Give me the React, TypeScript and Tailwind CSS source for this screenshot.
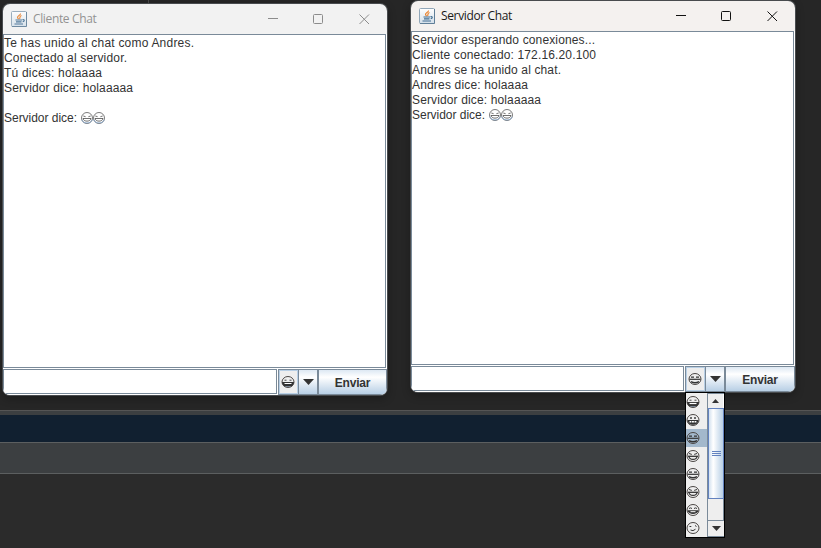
type Face = 'sweat' | 'teeth' | 'grin' | 'laugh' | 'open' | 'wink' | 'thin';

function Emoji({ face, color = '#333333', bg = '#eeeeee', className = '' }: { face: Face; color?: string; bg?: string; className?: string }) {
  const thin = face === 'thin';
  return (
    <svg viewBox="0 0 14 14" width="14" height="14" className={`shrink-0 ${className}`} fill="none" stroke={color} strokeWidth={thin ? 0.7 : 1}>
      <ellipse cx="7" cy="7" rx={thin ? 5.5 : 6} ry="5.5" fill={thin ? '#ffffff' : bg} stroke={thin ? '#444444' : '#4c4846'} />
      {face === 'sweat' && (
        <>
          <path d="M1 7h12c-.3 3-2.500 5-6 5S1.300 10 1 7z" fill={color} stroke="none" />
          <path d="M3.500 8.500h7" stroke="#ffffff" strokeWidth="1.200" />
          <path d="M4.500 11.500h5" stroke="#8d9cae" strokeWidth=".8" />
          <path d="M3.500 5.200h2M8.500 5.200h2" strokeWidth=".9" />
        </>
      )}
      {face === 'teeth' && (
        <>
          <path d="M1.500 7h11c-.3 3.500-2.500 4.800-5.500 4.800S1.800 10.500 1.500 7z" fill={color} stroke="none" />
          <path d="M3.500 8.700h7" stroke="#ffffff" strokeDasharray="1.900 .6" strokeWidth="1.500" />
          <path d="M5 4v2M9 4v2" strokeWidth="1.400" />
        </>
      )}
      {face === 'grin' && (
        <>
          <path d="M3 5.200h3M8 5.200h3" strokeWidth="1.300" />
          <path d="M1.500 7.300h11" strokeWidth="1.200" />
          <path d="M3 9.600q4 2.400 8 0" strokeWidth="1.400" />
        </>
      )}
      {face === 'laugh' && (
        <>
          <path d="M3 4.500l2.800.9M11 4.500l-2.800.9" />
          <path d="M2 7.300h10" strokeWidth="1.300" />
          <path d="M3 7.500c.5 3.800 7.500 3.800 8 0" strokeWidth="1.200" />
        </>
      )}
      {face === 'open' && (
        <>
          <path d="M3 5.500q1.500-1.200 3 0M8 5.500q1.500-1.200 3 0" />
          <path d="M1.500 7.300h11c-.7 5-10.300 5-11 0z" fill={color} stroke="none" />
          <path d="M4.500 8.700h5" stroke="#ffffff" />
        </>
      )}
      {face === 'wink' && <path d="M3.500 5.500h1.800M9 4.500l1.500 1M4.500 9q2.500 1.700 5-.8" />}
      {thin && (
        <>
          <path d="M3.300 5l2.300.7M10.700 5l-2.300.7M3 7.500h8c-.6 3.500-7.400 3.500-8 0z" />
          <path d="M1.800 8.700c.8 4.300 9.600 4.300 10.400 0" stroke="#7da4ce" strokeWidth=".7" />
        </>
      )}
    </svg>
  );
}

function JavaIcon({ faded }: { faded: boolean }) {
  return (
    <svg viewBox="0 0 16 16" width="16" height="16" className={faded ? 'opacity-90' : ''} fill="none">
      <defs>
        <linearGradient id="tile" x1="0" y1="0" x2="0" y2="1">
          <stop stopColor="#ffffff" />
          <stop offset="1" stopColor="#d3dfe9" />
        </linearGradient>
      </defs>
      <rect x=".5" y=".5" width="15" height="15" rx="1" fill="url(#tile)" stroke="#91a7b9" />
      <path d="M15.500 1v14.500H1" stroke="#607f98" />
      <path d="M9.500 2.500C10 4 6 5 6.500 6.500c.2.800 1 1 1 1.700M10.500 4.500C8 5.500 9.500 6.500 8.500 8" stroke="#ea822d" strokeWidth="1.200" />
      <path d="M4.500 9h6.500M5 10.800h5.500M3.500 13h8.500M11.500 8.700c2.500-.4 2 1.800.2 2" stroke="#416d91" strokeWidth="1.200" />
    </svg>
  );
}

type Line = { text: string; width: number; faces?: boolean };

function ChatWindow({ title, active, lines, face }: { title: string; active: boolean; lines: Line[]; face: Face }) {
  const ink = active ? '#111111' : '#8c8c8c';
  return (
    <section className={`flex h-[391px] w-[384px] flex-col overflow-hidden rounded-[7px] shadow-[0_0_0_1px_#484b4e,0_3px_10px_#00000055] ${active ? 'bg-[#f4f1ef]' : 'bg-[#f2f2f2]'}`}>
      <header className="flex h-[30px] shrink-0 items-center pl-2">
        <JavaIcon faded={!active} />
        <h1 className={`ml-1.5 flex-1 font-['Open_Sans','Noto_Sans',sans-serif] text-[12px] leading-none tracking-[-0.36px] ${active ? 'text-[#191919]' : 'text-[#929292]'}`}>{title}</h1>
        <svg width="106" height="12" viewBox="0 0 106 12" fill="none" stroke={ink} className="mr-[13px] shrink-0">
          <path d="M0 5.500h10" />
          <rect x="45.500" y="1.500" width="9" height="9" rx="1" />
          <path d="M91.500 1.500l9.500 9.500M101 1.500l-9.500 9.500" />
        </svg>
      </header>
      <div className="bg-white pr-px">
        <div className="h-[334px] border border-[#7a8a99] bg-white pt-px font-['Liberation_Sans',Arial,sans-serif] text-[12px] leading-[15px] text-[#333333]">
          {lines.map((line, i) => (
            <div key={i} className="flex h-[15px] items-center whitespace-pre">
              {line.text && (
                <svg width={line.width} height="15" className="shrink-0 overflow-visible">
                  <text x="0" y="11" textLength={line.width} lengthAdjust="spacing" fill="#333333">{line.text}</text>
                </svg>
              )}
              {line.faces && (
                <span className="ml-[3px] flex pb-px">
                  <Emoji face="thin" className="-mr-0.5" />
                  <Emoji face="thin" />
                </span>
              )}
            </div>
          ))}
        </div>
      </div>
      <footer className="flex h-[27px] shrink-0 bg-white pt-px">
        <div className={`h-[25px] border border-[#7a8a99] bg-white ${active ? 'w-[273px]' : 'w-[274px]'}`} />
        <div className="ml-px flex h-[26px] w-[40px] border border-[#7a8a99]">
          <div className="flex w-[19px] items-center justify-center border border-[#b8cfe5] bg-[#eeeeee]">
            <Emoji face={face} className="-ml-0.5" />
          </div>
          <div className="flex flex-1 items-center justify-center border-l border-[#7a8a99] bg-linear-to-b from-[#dde8f3] via-white via-30% to-[#b8cfe5]">
            <svg width="11" height="6" viewBox="0 0 11 6"><path d="M0 0h11L5.500 6z" fill="#333333" /></svg>
          </div>
        </div>
        <button className="h-[26px] flex-1 border border-[#7a8a99] bg-linear-to-b from-[#dde8f3] via-white via-30% to-[#b8cfe5] font-['Liberation_Sans',Arial,sans-serif] text-[12px] leading-none font-bold text-[#333333]">
          <span className="relative top-px tracking-[-0.2px]">Enviar</span>
        </button>
      </footer>
    </section>
  );
}

const clientLines: Line[] = [
  { text: 'Te has unido al chat como Andres.', width: 190 },
  { text: 'Conectado al servidor.', width: 123 },
  { text: 'Tú dices: holaaaa', width: 98 },
  { text: 'Servidor dice: holaaaaa', width: 129 },
  { text: '', width: 0 },
  { text: 'Servidor dice:', width: 73, faces: true },
];

const serverLines: Line[] = [
  { text: 'Servidor esperando conexiones...', width: 183 },
  { text: 'Cliente conectado: 172.16.20.100', width: 184 },
  { text: 'Andres se ha unido al chat.', width: 149 },
  { text: 'Andres dice: holaaaa', width: 116 },
  { text: 'Servidor dice: holaaaaa', width: 129 },
  { text: 'Servidor dice:', width: 73, faces: true },
];

const choices: Face[] = ['sweat', 'teeth', 'grin', 'laugh', 'grin', 'laugh', 'open', 'wink'];

function EmojiPopup() {
  return (
    <div className="flex h-[146px] w-[40px] border border-black bg-[#eeeeee]">
      <ul className="w-[21px] overflow-hidden">
        {choices.map((face, i) => (
          <li key={i} className={`flex h-[18px] items-center ${i === 2 ? 'bg-[#a3b8cc]' : ''}`}>
            <Emoji face={face} bg={i === 2 ? '#a3b8cc' : '#eeeeee'} />
          </li>
        ))}
      </ul>
      <div className="flex flex-1 flex-col border border-r-0 border-[#7a8a99]">
        <div className="flex h-[14px] items-center justify-center border-r border-white">
          <svg width="7" height="4" viewBox="0 0 7 4"><path d="M0 4h7L3.500 0z" fill="#333333" /></svg>
        </div>
        <div className="flex h-[91px] flex-col items-center justify-center gap-px border border-[#6382bf] bg-linear-to-r from-[#d3e1ef] via-white via-30% to-[#b8cfe5]">
          <i className="h-px w-[9px] bg-[#6382bf]" />
          <i className="h-px w-[9px] bg-[#6382bf]" />
          <i className="h-px w-[9px] bg-[#6382bf]" />
        </div>
        <div className="flex-1 border-r border-[#7a8a99]" />
        <div className="flex h-[16px] items-center justify-center border-t border-[#7a8a99]">
          <svg width="9" height="5" viewBox="0 0 9 5"><path d="M0 0h9L4.500 5z" fill="#333333" /></svg>
        </div>
      </div>
    </div>
  );
}

export default function App() {
  return (
    <main className="relative flex h-[548px] w-[821px] flex-col overflow-hidden bg-[#2b2b2b]">
      <div className="h-[410px] bg-[#262626]">
        <div className="ml-[148px] h-1 w-px bg-[#4a4a4a]" />
      </div>
      <div className="h-[5px] border-t border-[#555555] bg-[#3c3f41]" />
      <div className="h-[27px] bg-[#112030]" />
      <div className="h-[32px] border-y border-[#5c5f60] bg-[#3c3f41]" />
      <div className="absolute top-1 left-[3px]">
        <ChatWindow title="Cliente Chat" active={false} lines={clientLines} face="sweat" />
      </div>
      <div className="absolute top-px left-[411px]">
        <ChatWindow title="Servidor Chat" active lines={serverLines} face="grin" />
      </div>
      <div className="absolute top-[392px] left-[685px]">
        <EmojiPopup />
      </div>
    </main>
  );
}
